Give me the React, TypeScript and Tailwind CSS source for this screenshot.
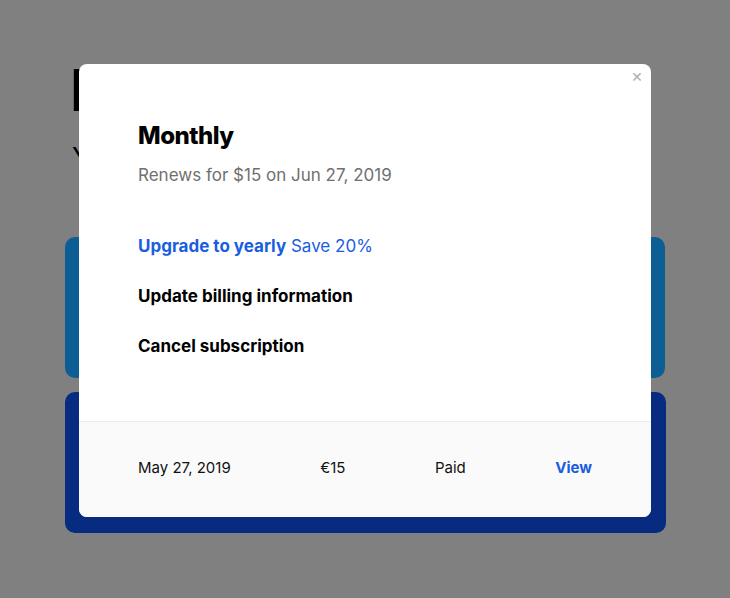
import React from 'react';

const font = { fontFamily: 'Inter, "Liberation Sans", sans-serif' };

const App: React.FC = () => {
  return (
    <div className="relative w-[730px] h-[598px] overflow-hidden bg-[#808080]" style={font}>
      {/* page behind the dialog (already dimmed) */}
      <div className="flex flex-col px-[65px] pt-[58px]">
        <h1 className="pl-[5px] text-[58px] leading-[64px] font-bold text-black">Invoices</h1>
        <p className="pl-[7px] mt-[20px] text-[27px] leading-[32px] text-black">Your subscription</p>
        <div className="mt-[63px] h-[141px] rounded-[10px] bg-[#0c5e95]" />
        <div className="mt-[14px] h-[141px] w-[601px] rounded-[10px] bg-[#072b80]" />
      </div>

      {/* dialog */}
      <div className="absolute left-[79px] top-[64px] w-[572px] h-[453px] rounded-[8px] bg-white overflow-hidden flex flex-col">
        <button className="absolute right-[8px] top-[3px] text-[#b3b3b3] text-[18px] leading-[18px]">×</button>
        <div className="flex-1 px-[59px] pt-[57px]">
          <h2 className="text-[24px] leading-[30px] font-extrabold text-black tracking-[-0.5px]">Monthly</h2>
          <p className="mt-[12px] text-[17px] leading-[24px] text-[#707070]">Renews for $15 on Jun 27, 2019</p>
          <div className="mt-[47px] flex flex-col gap-[26px] text-[17px] leading-[24px]">
            <p className="text-[#1a5ee0]">
              <span className="font-bold">Upgrade to yearly</span> Save 20%
            </p>
            <p className="font-bold text-black">Update billing information</p>
            <p className="font-bold text-black">Cancel subscription</p>
          </div>
        </div>
        <div className="h-[96px] border-t border-[#ececec] bg-[#fafafa] px-[59px] pb-[3px] flex items-center justify-between text-[15px] text-[#111]">
          <span>May 27, 2019</span>
          <span>€15</span>
          <span>Paid</span>
          <span className="font-bold text-[#1a5ee0]">View</span>
        </div>
      </div>
    </div>
  );
};

export default App;
